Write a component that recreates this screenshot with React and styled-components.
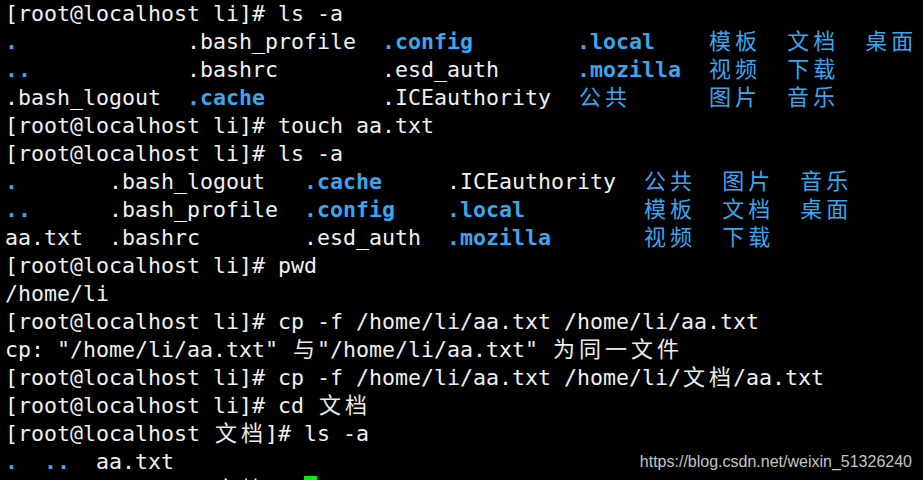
import React from "react";
import styled, { createGlobalStyle } from "styled-components";

const Global = createGlobalStyle`
  html, body { margin: 0; padding: 0; background: #000; }
  body { overflow: hidden; }
`;

const Terminal = styled.div`
  position: relative;
  width: 923px;
  height: 480px;
  overflow: hidden;
  background: #000;
  padding: 0 0 0 5px;
  box-sizing: border-box;
  font-family: "DejaVu Sans Mono", "Liberation Mono", "Noto Sans CJK SC", monospace;
  font-size: 21.6px;
  color: #f0f0f0;
`;

const Line = styled.div`
  height: 28px;
  line-height: 28px;
  white-space: pre;
`;

const Seg = styled.span`
  color: ${(p) => (p.$blue ? "#3aa6ee" : "#f0f0f0")};
  font-weight: ${(p) => (p.$blue ? 700 : 400)};
`;

const Wide = styled.span`
  display: inline-block;
  width: 26px;
  text-align: center;
  font-family: "Noto Sans CJK SC", sans-serif;
  font-size: 22px;
  font-weight: 400;
  line-height: 22px;
  vertical-align: baseline;
  color: ${(p) => (p.$blue ? "#3aa6ee" : "#ececec")};
`;

const Cursor = styled.span`
  display: inline-block;
  width: 13px;
  height: 28px;
  background: #00f000;
  vertical-align: top;
`;

const Watermark = styled.div`
  position: absolute;
  right: 11px;
  bottom: 9px;
  font-family: "Liberation Sans", Arial, sans-serif;
  font-size: 16px;
  color: #c4c4c4;
`;

const isWide = (ch) => /[\u3000-\u9fff\uff00-\uffef]/.test(ch);
const width = (s) => [...s].reduce((n, c) => n + (isWide(c) ? 2 : 1), 0);

const P = "[root@localhost li]# ";
const PD = "[root@localhost 文档]# ";

// each line: list of [col, text, blue]
const lines = [
  [[0, P + "ls -a"]],
  [[0, ".", 1], [14, ".bash_profile"], [29, ".config", 1], [44, ".local", 1], [54, "模板", 1], [60, "文档", 1], [66, "桌面", 1]],
  [[0, "..", 1], [14, ".bashrc"], [29, ".esd_auth"], [44, ".mozilla", 1], [54, "视频", 1], [60, "下载", 1]],
  [[0, ".bash_logout"], [14, ".cache", 1], [29, ".ICEauthority"], [44, "公共", 1], [54, "图片", 1], [60, "音乐", 1]],
  [[0, P + "touch aa.txt"]],
  [[0, P + "ls -a"]],
  [[0, ".", 1], [8, ".bash_logout"], [23, ".cache", 1], [34, ".ICEauthority"], [49, "公共", 1], [55, "图片", 1], [61, "音乐", 1]],
  [[0, "..", 1], [8, ".bash_profile"], [23, ".config", 1], [34, ".local", 1], [49, "模板", 1], [55, "文档", 1], [61, "桌面", 1]],
  [[0, "aa.txt"], [8, ".bashrc"], [23, ".esd_auth"], [34, ".mozilla", 1], [49, "视频", 1], [55, "下载", 1]],
  [[0, P + "pwd"]],
  [[0, "/home/li"]],
  [[0, P + "cp -f /home/li/aa.txt /home/li/aa.txt"]],
  [[0, 'cp: "/home/li/aa.txt" 与"/home/li/aa.txt" 为同一文件']],
  [[0, P + "cp -f /home/li/aa.txt /home/li/文档/aa.txt"]],
  [[0, P + "cd 文档"]],
  [[0, PD + "ls -a"]],
  [[0, ".", 1], [3, "..", 1], [7, "aa.txt"]],
  [[0, PD], "cursor"],
];

function renderText(text, blue, key) {
  const out = [];
  let buf = "";
  let i = 0;
  const flush = () => {
    if (buf) {
      out.push(
        <Seg key={`${key}-${i++}`} $blue={blue}>
          {buf}
        </Seg>
      );
      buf = "";
    }
  };
  for (const ch of text) {
    if (isWide(ch)) {
      flush();
      out.push(
        <Wide key={`${key}-${i++}`} $blue={blue}>
          {ch}
        </Wide>
      );
    } else buf += ch;
  }
  flush();
  return out;
}

function TermLine({ items }) {
  let col = 0;
  const parts = [];
  items.forEach((item, idx) => {
    if (item === "cursor") {
      parts.push(<Cursor key="cur" />);
      return;
    }
    const [c, text, blue] = item;
    if (c > col) {
      parts.push(<Seg key={`sp${idx}`}>{" ".repeat(c - col)}</Seg>);
      col = c;
    }
    parts.push(...renderText(text, !!blue, `t${idx}`));
    col += width(text);
  });
  return <Line>{parts}</Line>;
}

export default function App() {
  return (
    <>
      <Global />
      <Terminal>
        {lines.map((l, i) => (
          <TermLine key={i} items={l} />
        ))}
        <Watermark>https://blog.csdn.net/weixin_51326240</Watermark>
      </Terminal>
    </>
  );
}
